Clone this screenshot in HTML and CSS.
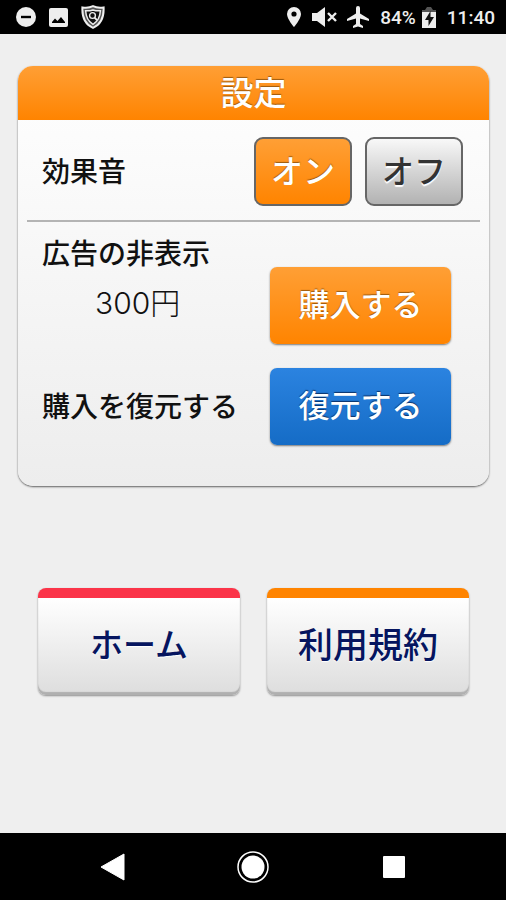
FILE: index.html
```html
<!DOCTYPE html>
<html lang="ja">
<head>
    <meta charset="UTF-8">
    <meta name="viewport" content="width=device-width, initial-scale=1">
    <title>設定</title>
    <link rel="stylesheet" href="styles.css">
</head>
<body>
<header class="status-bar">
    <div class="status-group status-left">
        <svg width="20" height="20" viewBox="0 0 20 20"><circle cx="10" cy="10" r="10" fill="#eee"/><path d="M5 10h10" stroke="#000" stroke-width="2.4"/></svg>
        <svg width="19" height="19" viewBox="0 0 19 19"><rect width="19" height="19" rx="2" fill="#eee"/><path d="M3 15v-1l3-3.500 2.500 2.500 3.500-4 4 5v1z" fill="#000"/></svg>
        <svg width="24" height="24" viewBox="0 0 24 24"><path d="M12 1.200C9 2.600 5 3 1.400 2.400 1 11 3 19 12 22.800 21 19 23 11 22.600 2.400 19 3 15 2.600 12 1.200z" fill="#555" stroke="#eee" stroke-width="2"/><path d="M12 5C9.500 5.800 7 6 4.600 5.800 5 12 7 16.500 12 19.300 17 16.500 19 12 19.400 5.800 17 6 14.500 5.800 12 5z" fill="#111" stroke="#eee" stroke-width="1.500"/><circle cx="11.500" cy="10.500" r="2.900" fill="none" stroke="#eee" stroke-width="1.400"/><path d="M13.500 12.500l2.500 2.700" stroke="#eee" stroke-width="1.800"/></svg>
    </div>
    <div class="status-group">
        <svg class="pin" width="14" height="20" viewBox="0 0 14 20"><path d="M7 0a7 7 0 0 0-7 7c0 5 7 13 7 13s7-8 7-13a7 7 0 0 0-7-7zm0 4.400a2.600 2.600 0 1 1 0 5.200 2.600 2.600 0 0 1 0-5.200z" fill="#eee" fill-rule="evenodd"/></svg>
        <svg class="mute" width="25" height="20" viewBox="0 0 25 20"><path d="M0 6h5l8-6v20l-8-6H0z" fill="#eee"/><path d="M16 6l8 8M24 6l-8 8" stroke="#eee" stroke-width="2.400"/></svg>
        <svg class="plane" width="22" height="22" viewBox="0 0 22 22"><path d="M22 15v-2l-9-5.500V2a2 2 0 0 0-4 0v5.500L0 13v2l9-2.600v5.500l-3 2V22l5-1.400 5 1.400v-2.100l-3-2v-5.500z" fill="#eee"/></svg>
        <span class="percent">84%</span>
        <svg class="battery" width="14" height="21" viewBox="0 0 14 21"><path d="M3 3l2-3h4l2 3h3v3H0V3z" fill="#555"/><path d="M0 5h14v16H0z" fill="#eee"/><path d="M8.500 4L3 13h3.500v6L12 10H8.500z" fill="#111"/></svg>
        <span>11:40</span>
    </div>
</header>

<main class="main">
    <section class="panel">
        <h1 class="panel-title">設定</h1>
        <div class="row sound-row">
            <span class="label" id="sound-label">効果音</span>
            <div class="switch" role="group" aria-labelledby="sound-label">
                <button type="button" class="toggle toggle-on" aria-pressed="true">オン</button>
                <button type="button" class="toggle toggle-off" aria-pressed="false">オフ</button>
            </div>
        </div>
        <div class="purchase">
            <div class="row ad-row">
                <div class="ad-text">
                    <p class="label">広告の非表示</p>
                    <p class="price">300円</p>
                </div>
                <button type="button" class="action action-buy">購入する</button>
            </div>
            <div class="row">
                <p class="label">購入を復元する</p>
                <button type="button" class="action action-restore">復元する</button>
            </div>
        </div>
    </section>

    <nav class="menu">
        <button type="button" class="tile tile-home">ホーム</button>
        <button type="button" class="tile tile-terms">利用規約</button>
    </nav>
</main>

<footer class="nav-bar">
    <button type="button" class="nav-button" aria-label="戻る">
        <svg width="32" height="32" viewBox="0 0 32 32"><path d="M28 3v26L5 16z" fill="#fff" stroke="#fff" stroke-width="1" stroke-linejoin="round"/></svg>
    </button>
    <button type="button" class="nav-button" aria-label="ホーム画面">
        <svg width="32" height="32" viewBox="0 0 32 32"><circle cx="16" cy="16" r="15" fill="none" stroke="#fff" stroke-width="1.500"/><circle cx="16" cy="16" r="11.500" fill="#fff"/></svg>
    </button>
    <button type="button" class="nav-button" aria-label="履歴">
        <svg width="32" height="32" viewBox="0 0 32 32"><rect x="5" y="5" width="22" height="22" rx="1" fill="#fff"/></svg>
    </button>
</footer>
</body>
</html>
```
FILE: styles.css
```css
* {
    margin: 0;
    padding: 0;
    box-sizing: border-box;
}

body {
    display: flex;
    flex-direction: column;
    min-height: 100vh;
    background-color: #efefef;
    color: #111111;
    font-family: "Noto Sans CJK JP", sans-serif;
}

button {
    padding-bottom: 6px;
    border: none;
    font-family: inherit;
    font-weight: 500;
    cursor: pointer;
}

svg {
    display: block;
    flex: none;
}

/* status bar */
.status-bar {
    display: flex;
    justify-content: space-between;
    align-items: center;
    height: 34px;
    padding: 0 11px 0 16px;
    background-color: #000000;
    color: #eeeeee;
    font-family: Roboto, sans-serif;
    font-size: 19px;
    font-weight: 500;
}

.status-group {
    display: flex;
    align-items: center;
}

.status-left {
    gap: 13px;
}

.pin,
.plane,
.battery {
    margin-right: 11px;
}

.mute {
    margin-right: 10px;
}

.percent {
    margin-right: 6px;
}

/* settings panel */
.main {
    flex: 1;
    padding: 32px 17px 32px 18px;
}

.panel {
    border-radius: 15px;
    background: linear-gradient(#ffffff, #ededed);
    box-shadow: 0 1px 2px rgba(0, 0, 0, 0.6);
    overflow: hidden;
}

.panel-title {
    height: 54px;
    background: linear-gradient(#ff9f35, #ff8400);
    color: #ffffff;
    font-size: 33px;
    font-weight: 500;
    line-height: 50px;
    text-align: center;
    text-shadow: 0 -1px 1px rgba(90, 50, 0, 0.6);
}

.row {
    display: flex;
    justify-content: space-between;
    align-items: center;
}

.sound-row {
    margin: 0 9px;
    padding: 17px 17px 14px 15px;
    border-bottom: 2px solid #b4b4b4;
}

.label {
    padding-bottom: 4px;
    font-size: 28px;
    font-weight: 500;
    line-height: 30px;
}

.switch {
    display: flex;
    gap: 13px;
}

.toggle {
    width: 98px;
    height: 69px;
    border: 2px solid #666666;
    border-radius: 9px;
    font-size: 32px;
}

.toggle-on {
    background: linear-gradient(#ff9f35, #ff8400);
    color: #ffffff;
    text-shadow: 0 -1px 1px rgba(90, 50, 0, 0.6);
}

.toggle-off {
    background: linear-gradient(#f8f8f8, #b2b2b2);
    color: #333333;
    text-shadow: 0 2px 1px #ffffff;
}

.purchase {
    display: flex;
    flex-direction: column;
    gap: 24px;
    padding: 15px 38px 41px 24px;
}

.ad-row {
    align-items: flex-end;
}

.ad-text {
    height: 107px;
}

.price {
    margin-top: 16px;
    padding-left: 53px;
    font-family: Inter, "Noto Sans CJK JP", sans-serif;
    font-size: 30px;
    font-weight: 300;
    line-height: 32px;
}

.action {
    width: 181px;
    height: 77px;
    border-radius: 7px;
    box-shadow: 0 1px 2px rgba(0, 0, 0, 0.5);
    color: #ffffff;
    font-size: 31px;
}

.action-buy {
    background: linear-gradient(#ff9f35, #ff8400);
    text-shadow: 0 -1px 1px rgba(90, 50, 0, 0.6);
}

.action-restore {
    background: linear-gradient(#2b83e0, #156cc6);
    text-shadow: 0 -1px 1px rgba(0, 20, 60, 0.7);
}

/* bottom menu */
.menu {
    display: grid;
    grid-template-columns: 1fr 1fr;
    gap: 27px;
    margin-top: 102px;
    padding: 0 20px;
}

.tile {
    height: 107px;
    padding-bottom: 8px;
    border-top: 10px solid;
    border-radius: 8px;
    background: linear-gradient(#ffffff, #dddddd);
    box-shadow: inset 0 -3px 1px #b0b0b0, 0 1px 2px rgba(0, 0, 0, 0.4);
    color: #06155f;
    font-size: 35px;
    text-shadow: 0 1px 1px #ffffff;
}

.tile-home {
    border-top-color: #fb3449;
    font-size: 33px;
}

.tile-terms {
    border-top-color: #ff8400;
}

/* system buttons */
.nav-bar {
    display: flex;
    justify-content: center;
    align-items: center;
    gap: 109px;
    height: 67px;
    background-color: #000000;
}

.nav-button {
    padding: 0;
    background: none;
}
```
